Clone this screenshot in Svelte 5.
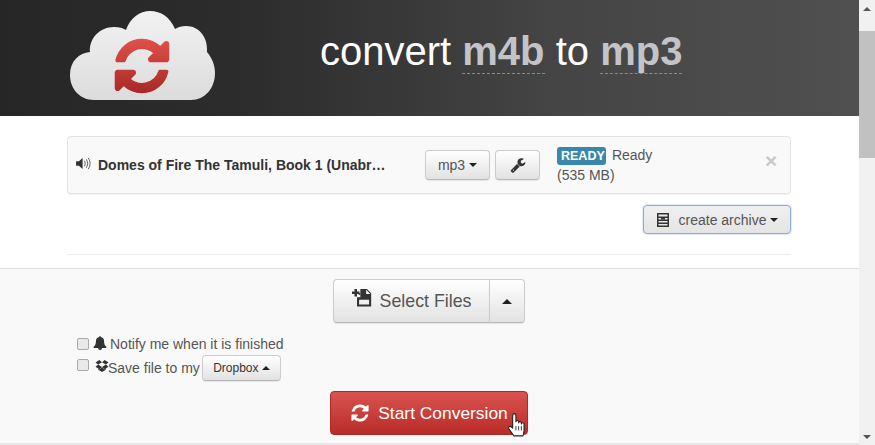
<script>
  const refreshPath = "M1639 1056q0 5-1 7-64 268-268 434.500t-478 166.500q-146 0-282.500-55t-243.500-157l-129 129q-19 19-45 19t-45-19-19-45v-448q0-26 19-45t45-19h448q26 0 45 19t19 45-19 45l-137 137q71 66 161 102t187 36q134 0 250-65t186-179q11-17 53-117 8-23 30-23h192q13 0 22.500 9.500t9.500 22.500zm25-800v448q0 26-19 45t-45 19h-448q-26 0-45-19t-19-45 19-45l138-138q-148-137-349-137-134 0-250 65t-186 179q-11 17-53 117-8 23-30 23h-199q-13 0-22.500-9.500t-9.500-22.500v-7q65-268 270-434.500t480-166.500q146 0 284 55.500t245 156.500l130-129q19-19 45-19t45 19 19 45z";
</script>

<div class="shell">
  <div class="page">
    <header class="top">
      <svg class="logo" viewBox="0 0 145 90" aria-hidden="true">
        <defs>
          <linearGradient id="cloudFill" x1="0" y1="0" x2="0" y2="1">
            <stop offset="0" stop-color="#f2f2f2" />
            <stop offset="1" stop-color="#dcdcdc" />
          </linearGradient>
          <linearGradient id="redFill" x1="0" y1="0" x2="0" y2="1">
            <stop offset="0" stop-color="#e0504a" />
            <stop offset="1" stop-color="#a82a26" />
          </linearGradient>
        </defs>
        <path
          fill="url(#cloudFill)"
          d="M24 89C10 89 0 78 0 64 0 50 9 42 20 41 19 27 30 16 44 16c5 0 9 1 12 3C60 7 70 0 80 0c11 0 20 6 25 18 3-2 7-3 11-3 13 0 22 11 21 26 5 6 8 13 8 21 0 15-10 27-24 27z"
        />
        <svg x="41" y="24" width="62" height="62" viewBox="0 0 1792 1792">
          <path fill="url(#redFill)" stroke="url(#redFill)" stroke-width="40" d={refreshPath} />
        </svg>
      </svg>
      <h1>convert <span class="fmt">m4b</span> to <span class="fmt">mp3</span></h1>
    </header>

    <section class="files">
      <div class="panel">
        <svg class="speaker" viewBox="0 0 16 14" aria-hidden="true">
          <path fill="#333" d="M0 4.500h3L7 1v12L3 9.500H0z" />
          <path fill="none" stroke="#555" stroke-width="1" d="M9 4c1 1.800 1 4.200 0 6M11 2.500c2 2.800 2 6.200 0 9M13 1c2.800 3.800 2.800 8.200 0 12" />
        </svg>
        <strong class="name">Domes of Fire The Tamuli, Book 1 (Unabr…</strong>
        <button class="btn fmt-btn">mp3 <i class="caret"></i></button>
        <button class="btn wrench-btn" aria-label="settings">
          <svg viewBox="0 0 1792 1792" width="16" height="16">
            <path fill="#333" d="M448 1472q0-26-19-45t-45-19-45 19-19 45 19 45 45 19 45-19 19-45zm644-420l-682 682q-37 37-90 37-52 0-91-37l-106-108q-38-36-38-90 0-53 38-91l681-681q39 98 114.500 173.500t173.500 114.500zm634-435q0 39-23 106-47 134-164.500 217.500t-258.500 83.500q-185 0-316.500-131.500t-131.500-316.500 131.500-316.500 316.500-131.500q58 0 121.500 16.500t107.500 46.500q16 11 16 28t-16 28l-293 169v224l193 107q5-3 79-48.500t135.500-81 70.500-35.500q15 0 23.500 10t8.500 25z" />
          </svg>
        </button>
        <div class="status">
          <div><span class="label">READY</span> Ready</div>
          <div class="size">(535 MB)</div>
        </div>
        <span class="close">×</span>
      </div>

      <div class="archive-row">
        <button class="btn archive">
          <svg viewBox="0 0 14 14" width="14" height="14" aria-hidden="true">
            <path fill="#333" fill-rule="evenodd" d="M1 0h12v14H1zM2.500 1.500v2h9v-2zM2.500 5v1.500h9V5zM2.500 8v1.500h9V8zM2.500 11v1.500h9V11z" />
            <rect x="5" y="5" width="4" height="1.500" fill="#333" />
          </svg>
          <span>create archive</span>
          <i class="caret"></i>
        </button>
      </div>
      <hr />
    </section>

    <section class="actions">
      <div class="split">
        <button class="btn select">
          <svg viewBox="0 0 24 24" width="20" height="20" aria-hidden="true">
            <path fill="#333" d="M10 0h8l5 5v16H6V10h4zM17 1v5h5zM8.500 13v5.500h12V13z" />
            <path fill="#333" d="M3 0h3v3h3v3H6v3H3V6H0V3h3z" />
            <rect x="8" y="5" width="2" height="2" fill="#333" />
          </svg>
          <span>Select Files</span>
        </button>
        <button class="btn select-caret" aria-label="more"><i class="caret up big"></i></button>
      </div>

      <div class="options">
        <label class="opt">
          <input type="checkbox" />
          <svg class="bell" viewBox="0 0 1792 1792" width="14" height="14" aria-hidden="true">
            <path fill="#333" d="M912 1696q0-16-16-16-59 0-101.500-42.500t-42.500-101.500q0-16-16-16t-16 16q0 73 51.500 124.500t124.500 51.500q16 0 16-16zm816-288q0 52-38 90t-90 38h-448q0 106-75 181t-181 75-181-75-75-181h-448q-52 0-90-38t-38-90q50-42 91-88t85-119.500 74.500-158.500 50-206 19.500-260q0-152 117-282.500t307-158.500q-8-19-8-39 0-40 28-68t68-28 68 28 28 68q0 20-8 39 190 28 307 158.500t117 282.500q0 139 19.500 260t50 206 74.500 158.500 85 119.500 91 88z" />
          </svg>
          <span>Notify me when it is finished</span>
        </label>
        <div class="opt second">
          <input type="checkbox" />
          <svg class="dropbox" viewBox="0 0 1792 1792" width="14" height="14" aria-hidden="true">
            <path fill="#333" d="M402 707l494 305-342 285-490-319zm986 555v108l-490 293v1l-1-1-1 1v-1l-489-293v-108l147 96 342-284v-2l1 1 1-1v2l343 284zm-834-1144l342 285-494 304-338-270zm836 589l338 271-489 319-343-285zm-151-589l489 319-338 270-494-304z" />
          </svg>
          <span>Save file to my</span>
          <button class="btn dropbox-btn">Dropbox <i class="caret up"></i></button>
        </div>
      </div>

      <div class="start-wrap">
        <button class="start">
          <svg viewBox="0 0 1792 1792" width="20" height="20" aria-hidden="true">
            <path fill="#fff" d={refreshPath} />
          </svg>
          <span>Start Conversion</span>
        </button>
        <svg class="hand" viewBox="0 0 18 24" aria-hidden="true">
          <path
            fill="#fff"
            stroke="#222"
            stroke-width="1"
            stroke-linejoin="round"
            d="M5 13V3c0-2 3-2 3 0v6c0-1.500 2.500-1.500 2.500 0v1c0-1.500 2.500-1.500 2.500 0v1c0-1.500 2.500-1.500 2.500 0v6c0 2-.5 3-1 5H6c-1-2-3-4-4.500-6.500C.5 13.500 3 12 5 15z"
          />
          <path fill="none" stroke="#222" stroke-width=".8" d="M8 13v4M10.500 13v4M13 13v4" />
        </svg>
      </div>
    </section>
  </div>

  <div class="scrollbar">
    <i class="arrow"></i>
    <div class="thumb"></div>
    <div class="rest"></div>
    <i class="arrow down"></i>
  </div>
</div>

<style>
  :global(body) {
    margin: 0;
    overflow: hidden;
  }

  .shell {
    display: flex;
    height: 445px;
    overflow: hidden;
    font-family: "Liberation Sans", Arial, sans-serif;
    font-size: 14px;
    color: #555;
    background: #fff;
  }

  .page {
    flex: 1;
    min-width: 0;
    display: flex;
    flex-direction: column;
  }

  .top {
    height: 116px;
    flex: none;
    display: flex;
    align-items: flex-start;
    padding-left: 70px;
    box-sizing: border-box;
    background: linear-gradient(to right, #262626 0%, #2d2d2d 30%, #454545 65%, #505050 100%);
  }

  .logo {
    width: 145px;
    height: 90px;
    margin-top: 11px;
    flex: none;
  }

  h1 {
    margin: 26px 0 0 105px;
    font-size: 40px;
    line-height: 50px;
    font-weight: 400;
    color: #fff;
    white-space: nowrap;
  }

  .fmt {
    font-weight: 700;
    color: #c2c4c8;
    border-bottom: 1px dashed #8a8a8a;
  }

  .files {
    padding: 20px 68px 0 67px;
    flex: none;
  }

  .panel {
    height: 58px;
    box-sizing: border-box;
    display: flex;
    align-items: center;
    padding: 0 8px;
    background: #f9f9f9;
    border: 1px solid #e3e3e3;
    border-radius: 4px;
    box-shadow: 0 1px 1px rgba(0, 0, 0, 0.05);
  }

  .speaker {
    width: 15px;
    height: 13px;
    flex: none;
    margin-bottom: 4px;
  }

  .name {
    width: 327px;
    margin-left: 7px;
    flex: none;
    color: #333;
    white-space: nowrap;
  }

  .btn {
    font-family: inherit;
    font-size: 14px;
    color: #333;
    border: 1px solid #ccc;
    border-bottom-color: #b8b8b8;
    border-radius: 4px;
    background: linear-gradient(to bottom, #fff 0%, #e2e2e2 100%);
    box-shadow: 0 1px 1px rgba(0, 0, 0, 0.08);
    padding: 0;
    display: inline-flex;
    align-items: center;
    justify-content: center;
  }

  .caret {
    display: inline-block;
    width: 0;
    height: 0;
    border-left: 4px solid transparent;
    border-right: 4px solid transparent;
    border-top: 4px solid #222;
    margin-left: 3px;
  }

  .caret.up {
    border-top: 0;
    border-bottom: 4px solid #222;
  }

  .caret.big {
    margin: 0;
    border-left-width: 5px;
    border-right-width: 5px;
    border-bottom-width: 5px;
  }

  .fmt-btn {
    width: 65px;
    height: 30px;
    flex: none;
    color: #555;
    gap: 1px;
  }

  .wrench-btn {
    width: 45px;
    height: 30px;
    margin-left: 5px;
    flex: none;
  }

  .status {
    margin: -1px 0 0 17px;
    line-height: 20px;
    width: 170px;
    flex: none;
  }

  .label {
    display: inline-block;
    background: #3a87ad;
    color: #fff;
    font-weight: 700;
    font-size: 12.500px;
    line-height: 18px;
    padding: 0 4px;
    border-radius: 3px;
    margin-right: 2px;
    width: 41px;
    text-align: center;
  }

  .close {
    margin: 0 0 10px 38px;
    font-size: 21px;
    font-weight: 700;
    color: #c8c8c8;
    line-height: 1;
  }

  .archive-row {
    display: flex;
    justify-content: flex-end;
    margin-top: 11px;
  }

  .archive {
    width: 148px;
    height: 29px;
    gap: 9px;
    color: #555;
    border-color: #8fa9d8;
    background: linear-gradient(to bottom, #f0f0f0 0%, #e4e4e4 100%);
    box-shadow: 0 0 2px rgba(90, 130, 210, 0.6);
  }

  .archive .caret {
    margin-left: -5px;
  }

  hr {
    border: 0;
    border-top: 1px solid #eee;
    margin: 20px 0 0;
  }

  .actions {
    margin-top: 13px;
    flex: 1;
    box-sizing: border-box;
    border-top: 1px solid #ddd;
    border-bottom: 2px solid #e6e6e6;
    background: #f9f9f9;
    padding-top: 10px;
    display: flex;
    flex-direction: column;
  }

  .split {
    display: flex;
    align-self: center;
    height: 44px;
    margin-right: 1px;
  }

  .select {
    width: 157px;
    border-radius: 4px 0 0 4px;
    font-size: 17.800px;
    color: #555;
    gap: 8px;
  }

  .select svg {
    margin-bottom: 4px;
  }

  .select-caret {
    width: 36px;
    margin-left: -1px;
    border-radius: 0 4px 4px 0;
  }

  .options {
    padding: 11px 0 0 77px;
    display: flex;
    flex-direction: column;
  }

  .opt {
    display: flex;
    align-items: center;
    height: 20px;
  }

  .opt input {
    appearance: none;
    width: 12px;
    height: 12px;
    margin: 0;
    border: 1px solid #aaa;
    border-radius: 2px;
    background: #e9e9e9;
    flex: none;
  }

  .bell {
    margin-left: 4px;
    margin-bottom: 3px;
  }

  .opt span {
    margin-left: 3px;
  }

  .second {
    height: 26px;
    margin-top: 1px;
  }

  .second input {
    margin-bottom: 7px;
  }

  .dropbox {
    margin-left: 6px;
    margin-bottom: 5px;
  }

  .second span {
    margin-left: -1px;
  }

  .dropbox-btn {
    width: 79px;
    height: 26px;
    font-size: 12px;
    margin-left: 2px;
  }

  .start-wrap {
    align-self: center;
    position: relative;
    margin: 10px 1px 0 0;
  }

  .start {
    width: 198px;
    height: 44px;
    font-family: inherit;
    font-size: 17.400px;
    color: #fff;
    border: 1px solid #ac2925;
    border-radius: 4px;
    background: linear-gradient(to bottom, #d9534f 0%, #b92c28 100%);
    display: flex;
    align-items: center;
    justify-content: center;
    gap: 8px;
    padding: 0;
  }

  .hand {
    position: absolute;
    left: 177px;
    top: 21px;
    width: 20px;
    height: 26px;
  }

  .scrollbar {
    width: 16px;
    flex: none;
    background: #f1f1f1;
    display: flex;
    flex-direction: column;
    align-items: center;
  }

  .arrow {
    flex: none;
    width: 0;
    height: 0;
    margin: 7px 0 6px;
    border-left: 4px solid transparent;
    border-right: 4px solid transparent;
    border-bottom: 4px solid #555;
  }

  .arrow.down {
    border-bottom: 0;
    border-top: 4px solid #555;
    margin: 0 0 6px;
  }

  .thumb {
    flex: none;
    width: 100%;
    height: 127px;
    margin-top: 14px;
    background: #c1c1c1;
  }

  .rest {
    flex: 1;
  }
</style>
